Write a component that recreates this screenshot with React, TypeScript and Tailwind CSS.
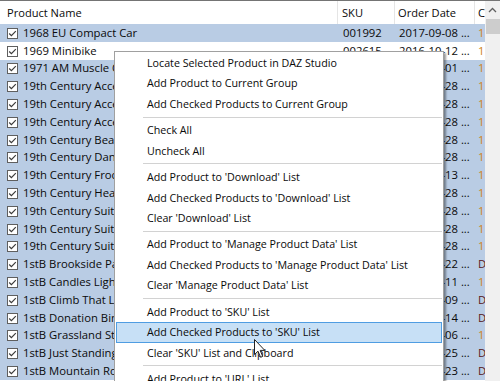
import React from "react";

type Row = { name: string; sku: string; date: string; c: "1" | "D"; sel: boolean };

const rows: Row[] = [
  { name: "1968 EU Compact Car", sku: "001992", date: "2017-09-08", c: "1", sel: true },
  { name: "1969 Minibike", sku: "002615", date: "2016-10-12", c: "1", sel: false },
  { name: "1971 AM Muscle Car", sku: "002731", date: "2017-02-01", c: "1", sel: true },
  { name: "19th Century Accessories 1", sku: "002101", date: "2016-11-28", c: "1", sel: true },
  { name: "19th Century Accessories 2", sku: "002102", date: "2016-11-28", c: "1", sel: true },
  { name: "19th Century Accessories 3", sku: "002103", date: "2016-11-28", c: "1", sel: true },
  { name: "19th Century Beauty", sku: "002104", date: "2016-11-28", c: "1", sel: true },
  { name: "19th Century Dance Gown", sku: "002105", date: "2016-11-28", c: "1", sel: true },
  { name: "19th Century Frock Coat", sku: "002201", date: "2017-01-13", c: "1", sel: true },
  { name: "19th Century Heat", sku: "002106", date: "2016-11-28", c: "1", sel: true },
  { name: "19th Century Suit For M7", sku: "002107", date: "2016-11-28", c: "1", sel: true },
  { name: "19th Century Suit For G3M", sku: "002108", date: "2016-11-28", c: "1", sel: true },
  { name: "19th Century Suit For G8M", sku: "002109", date: "2016-11-28", c: "1", sel: true },
  { name: "1stB Brookside Pavilion", sku: "002441", date: "2017-04-22", c: "D", sel: true },
  { name: "1stB Candles Lighting", sku: "002442", date: "2017-06-11", c: "1", sel: true },
  { name: "1stB Climb That Ladder", sku: "002443", date: "2017-05-09", c: "D", sel: true },
  { name: "1stB Donation Bin", sku: "002444", date: "2017-07-14", c: "D", sel: true },
  { name: "1stB Grassland Steppe", sku: "002445", date: "2017-08-06", c: "1", sel: true },
  { name: "1stB Just Standing Around", sku: "002446", date: "2017-03-25", c: "D", sel: true },
  { name: "1stB Mountain Road", sku: "002447", date: "2017-02-23", c: "D", sel: true },
];

type Item = { label: string; hl?: boolean } | "sep";

const items: Item[] = [
  { label: "Locate Selected Product in DAZ Studio" },
  { label: "Add Product to Current Group" },
  { label: "Add Checked Products to Current Group" },
  "sep",
  { label: "Check All" },
  { label: "Uncheck All" },
  "sep",
  { label: "Add Product to 'Download' List" },
  { label: "Add Checked Products to 'Download' List" },
  { label: "Clear 'Download' List" },
  "sep",
  { label: "Add Product to 'Manage Product Data' List" },
  { label: "Add Checked Products to 'Manage Product Data' List" },
  { label: "Clear 'Manage Product Data' List" },
  "sep",
  { label: "Add Product to 'SKU' List" },
  { label: "Add Checked Products to 'SKU' List", hl: true },
  { label: "Clear 'SKU' List and Clipboard" },
  "sep",
  { label: "Add Product to 'URL' List" },
  { label: "Add Checked Products to 'URL' List" },
];

function CheckBox() {
  return (
    <svg width="11" height="11" viewBox="0 0 11 11" className="shrink-0">
      <rect x="0.5" y="0.5" width="10" height="10" fill="#ffffff" stroke="#5f5f5f" />
      <path d="M2.2 5.5 L4.4 7.7 L8.8 3.1" fill="none" stroke="#3c3c3c" strokeWidth="1.2" />
    </svg>
  );
}

function Cursor() {
  return (
    <svg width="13" height="20" viewBox="0 0 13 20" className="absolute left-[254px] top-[338px]">
      <path
        d="M0.5 0.5 L0.5 15.5 L4 12.2 L6.6 18.3 L8.7 17.4 L6.2 11.4 L10.8 11.4 Z"
        fill="#ffffff"
        stroke="#222222"
        strokeWidth="1"
        strokeLinejoin="round"
      />
    </svg>
  );
}

export default function App() {
  return (
    <div className="relative w-[500px] h-[381px] overflow-hidden bg-white border-t border-[#747474] font-['Open_Sans',sans-serif] text-[#0a0a0a]">
      <div className="flex h-full">
        <div className="w-[485px] flex flex-col text-[11.3px]">
          <div className="flex h-[23.4px] shrink-0 bg-white text-[11.1px]">
            <div className="w-[338px] border-r border-[#e5e5e5] flex items-center pl-[7px] pt-[2px]">Product Name</div>
            <div className="w-[57px] border-r border-[#e5e5e5] flex items-center pl-[4px] pt-[2px]">SKU</div>
            <div className="w-[80px] border-r border-[#e5e5e5] flex items-center pl-[3px] pt-[2px]">Order Date</div>
            <div className="w-[10px] flex items-center pl-[3px] pt-[2px] overflow-hidden">C</div>
          </div>
          {rows.map((r, i) => (
            <div
              key={i}
              className={r.sel ? "flex h-[17.8px] shrink-0 items-center bg-[#b9cce4] whitespace-nowrap" : "flex h-[17.8px] shrink-0 items-center bg-white whitespace-nowrap"}
            >
              <div className="w-[338px] flex items-center pl-[7px] overflow-hidden">
                <CheckBox />
                <span className="ml-[5px]">{r.name}</span>
              </div>
              <div className="w-[57px] pl-[5px] overflow-hidden">{r.sku}</div>
              <div className="w-[80px] pl-[4px] overflow-hidden">{r.date} ...</div>
              <div className={r.c === "1" ? "w-[10px] pl-[3px] overflow-hidden text-[#cf8420]" : "w-[10px] pl-[3px] overflow-hidden text-[#5a1a1a]"}>
                {r.c === "1" ? "1" : "D"}
              </div>
            </div>
          ))}
        </div>
        <div className="w-[15px] bg-[#f0f0f0] flex flex-col items-center">
          <div className="h-[17px] flex items-center justify-center">
            <svg width="9" height="6" viewBox="0 0 9 6">
              <path d="M1 5 L4.5 1.5 L8 5" fill="none" stroke="#606060" strokeWidth="1.3" />
            </svg>
          </div>
          <div className="w-[14px] h-[15px] mt-[1px] bg-[#cdcdcd]" />
        </div>
      </div>

      <div className="absolute left-[114px] top-[50px] w-[330px] bg-white border border-[#a0a0a0] shadow-[2px_2px_2px_rgba(0,0,0,0.4)] px-[1px] pt-[0.5px] text-[10.7px] text-[#0a0a0a] whitespace-nowrap">
        {items.map((it, i) =>
          it === "sep" ? (
            <div key={i} className="h-[5.6px] flex items-center pl-[27px]">
              <div className="h-px w-full bg-[#d2d2d2]" />
            </div>
          ) : it.hl ? (
            <div key={i} className="h-[20.6px] flex items-center pl-[30px] border border-[#4f9de2] bg-[#c7e0f6]">
              {it.label}
            </div>
          ) : (
            <div key={i} className="h-[20.6px] flex items-center pl-[31px]">
              {it.label}
            </div>
          )
        )}
      </div>

      <Cursor />
    </div>
  );
}
